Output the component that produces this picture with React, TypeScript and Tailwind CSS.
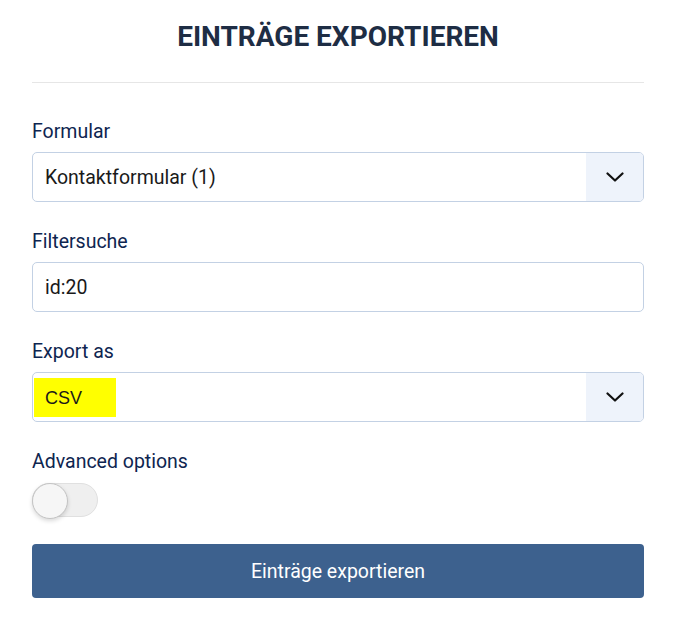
import React from "react";

function Chevron() {
  return (
    <svg width="18" height="10" viewBox="0 0 18 10" fill="none">
      <path d="M1.5 1.5 L9 8.5 L16.5 1.5" stroke="#111" strokeWidth="2.2" strokeLinecap="round" strokeLinejoin="round" />
    </svg>
  );
}

function Select({ children }: { children: React.ReactNode }) {
  return (
    <div className="mt-2 flex h-[50px] items-stretch overflow-hidden rounded-[5px] border border-[#c3d1e4] bg-white">
      <div className="flex flex-1 items-center pt-[2px] text-[19.5px] text-[#1a1a1a]">{children}</div>
      <div className="flex w-[57px] items-center justify-center bg-[#eef3fb]">
        <Chevron />
      </div>
    </div>
  );
}

function Label({ children, first }: { children: React.ReactNode; first?: boolean }) {
  return (
    <div className={`${first ? "mt-[37px]" : "mt-7"} text-[19.5px] leading-6 text-[#0e2550]`}>{children}</div>
  );
}

export default function App() {
  return (
    <div className="min-h-[634px] w-[678px] bg-white pl-8 pt-[21px]" style={{ fontFamily: "Roboto, 'Liberation Sans', sans-serif" }}>
      <div className="w-[612px]">
        <h1 className="text-center text-[28px] font-bold leading-8 text-[#1e2d44]">EINTRÄGE EXPORTIEREN</h1>
        <div className="mt-[29px] h-px bg-[#e6e6e6]" />

        <Label first>Formular</Label>
        <Select>
          <span className="pl-3">Kontaktformular (1)</span>
        </Select>

        <Label>Filtersuche</Label>
        <div className="mt-2 flex h-[50px] items-center rounded-[5px] border border-[#c3d1e4] bg-white pl-3 pt-[2px] text-[19.5px] text-[#1a1a1a]">
          id:20
        </div>

        <Label>Export as</Label>
        <Select>
          <span
            className="-mt-[2px] ml-px flex h-[39px] w-[82px] items-center bg-[#ffff00] pl-[11px] pt-[2px] text-[18px] text-[#1a1a1a]"
            style={{ fontFamily: "'Liberation Sans', Arial, sans-serif" }}
          >
            CSV
          </span>
        </Select>

        <Label>Advanced options</Label>
        <div className="mt-2 flex h-9 items-center">
          <div className="relative h-[34px] w-[66px] rounded-full border border-[#e0e0e0] bg-[#efefef]">
            <div className="absolute -left-px -top-px h-9 w-9 rounded-full border border-[#c4c4c4] bg-[#f6f6f6] shadow-[0_2px_4px_rgba(0,0,0,0.15)]" />
          </div>
        </div>

        <button className="mt-[26px] flex h-[54px] w-full items-center justify-center rounded-[4px] bg-[#3d618e] pt-[2px] text-[19.5px] text-white">
          Einträge exportieren
        </button>
      </div>
    </div>
  );
}
